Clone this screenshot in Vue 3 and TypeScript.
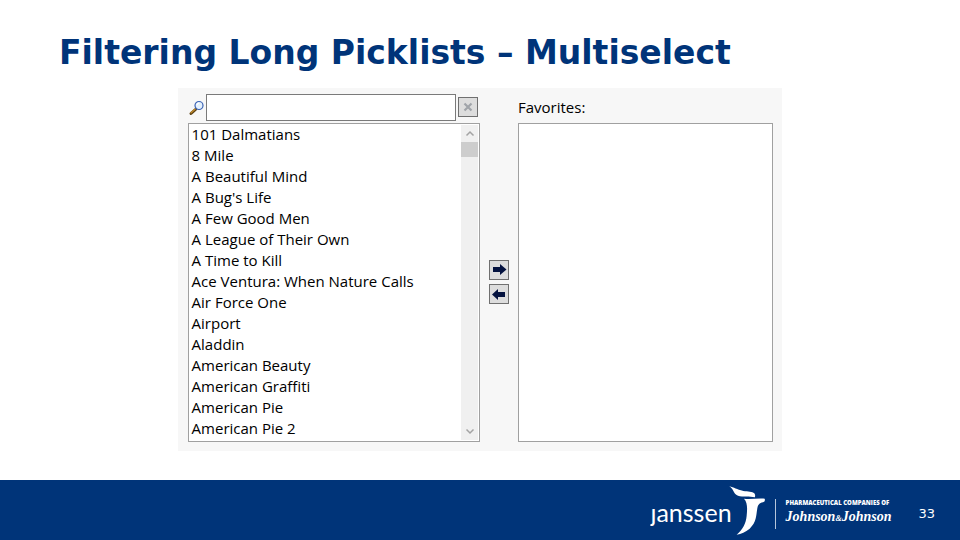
<script setup lang="ts">
import { computed, ref } from 'vue'

const movies: string[] = [
  '101 Dalmatians',
  '8 Mile',
  'A Beautiful Mind',
  "A Bug's Life",
  'A Few Good Men',
  'A League of Their Own',
  'A Time to Kill',
  'Ace Ventura: When Nature Calls',
  'Air Force One',
  'Airport',
  'Aladdin',
  'American Beauty',
  'American Graffiti',
  'American Pie',
  'American Pie 2',
]

const filter = ref('')
const favorites = ref<string[]>([])
const pickedLeft = ref<string[]>([])
const pickedRight = ref<string[]>([])

const available = computed(() =>
  movies.filter(
    (m) => !favorites.value.includes(m) && m.toLowerCase().includes(filter.value.toLowerCase()),
  ),
)

function add(): void {
  favorites.value = [...favorites.value, ...pickedLeft.value]
  pickedLeft.value = []
}

function remove(): void {
  favorites.value = favorites.value.filter((m) => !pickedRight.value.includes(m))
  pickedRight.value = []
}
</script>

<template>
  <div class="slide">
    <h1 class="title">Filtering Long Picklists – Multiselect</h1>

    <main class="panel">
      <div class="column">
        <div class="head">
          <label class="lens" for="filter" aria-label="Filter">
            <svg width="16" height="16" viewBox="0 0 16 16">
              <path d="M3 13.500 7.500 9.500" stroke="#5c4012" stroke-width="3" stroke-linecap="round" />
              <path d="M3 12.800 7 9.300" stroke="#c08a2c" stroke-width="1.400" stroke-linecap="round" />
              <circle cx="11" cy="5.500" r="4" fill="#e4f1fd" stroke="#3a62b4" stroke-width="1.200" />
              <path d="M8.900 5.200a2.200 2.200 0 0 1 2-2" fill="none" stroke="#fff" stroke-width="1.200" />
            </svg>
          </label>
          <input id="filter" v-model="filter" class="filter" type="text" />
          <button class="square" type="button" aria-label="Clear filter" @click="filter = ''">
            <svg width="18" height="18" viewBox="0 0 18 18">
              <path d="M5.500 5.500l7 7M12.500 5.500l-7 7" stroke="#a0a4a9" stroke-width="2.200" />
            </svg>
          </button>
        </div>
        <div class="box">
          <select v-model="pickedLeft" class="list" multiple size="15" aria-label="Available">
            <option v-for="m in available" :key="m" :value="m">{{ m }}</option>
          </select>
          <div class="scrollbar" aria-hidden="true">
            <svg width="17" height="17" viewBox="0 0 17 17">
              <path d="M5.500 10.500 9 7l3.500 3.500" fill="none" stroke="#a3a3a3" stroke-width="1.500" />
            </svg>
            <div class="thumb"></div>
            <svg class="down" width="17" height="17" viewBox="0 0 17 17">
              <path d="M5.500 6.500 9 10l3.500-3.500" fill="none" stroke="#a3a3a3" stroke-width="1.500" />
            </svg>
          </div>
        </div>
      </div>

      <div class="movers">
        <button class="square" type="button" aria-label="Add to favorites" @click="add">
          <svg width="18" height="18" viewBox="0 0 18 18">
            <path d="M3 6h7V3l6.500 5.500L10 14v-3H3z" fill="#04123f" />
          </svg>
        </button>
        <button class="square" type="button" aria-label="Remove from favorites" @click="remove">
          <svg width="18" height="18" viewBox="0 0 18 18">
            <path d="M15 7H8V4L2 9.500 8 15v-3h7z" fill="#04123f" />
          </svg>
        </button>
      </div>

      <div class="column">
        <div class="head">
          <label for="favorites">Favorites:</label>
        </div>
        <div class="box">
          <select id="favorites" v-model="pickedRight" class="list" multiple size="15">
            <option v-for="m in favorites" :key="m" :value="m">{{ m }}</option>
          </select>
        </div>
      </div>
    </main>

    <footer class="footer">
      <span class="brand">janssen</span>
      <svg class="emblem" width="40" height="52" viewBox="0 -2 120 156" aria-hidden="true">
        <path d="M4 5C18 8 26 15 46 19C60 21 73 20 79 26Q83 31 81 38C64 34 45 38 30 33C14 27 19 14 4 5Z" fill="#fff" />
        <path d="M48 42C66 45 88 40 110 42Q113 50 105 53C94 55 90 60 88 71C84 94 86 112 65 132C52 143 40 147 26 150C44 135 54 116 56 93C58 72 59 54 48 42Z" fill="#fff" />
      </svg>
      <div class="company">
        <span class="caption">PHARMACEUTICAL COMPANIES OF</span>
        <span class="script">Johnson<small>&amp;</small>Johnson</span>
      </div>
      <span class="page">33</span>
    </footer>
  </div>
</template>

<style>
body {
  margin: 0;
}
</style>

<style scoped>
.slide {
  display: flex;
  flex-direction: column;
  min-height: 100vh;
  background: #fff;
  color: #000;
  font: 15px/21px 'Open Sans', 'Noto Sans', sans-serif;
}

.title {
  margin: 0;
  padding: 33px 59px 15px;
  color: #003479;
  font: bold 33px/40px 'DejaVu Sans', sans-serif;
  white-space: nowrap;
}

.panel {
  box-sizing: border-box;
  display: grid;
  grid-template-columns: 292fr 38px 255fr;
  width: 63%;
  margin: 0 auto;
  padding: 6px 9px 9px 10px;
  background: #f7f7f7;
}

.column {
  display: flex;
  flex-direction: column;
  gap: 2px;
  min-width: 0;
}

.head {
  display: flex;
  align-items: center;
  height: 27px;
}

.lens {
  display: flex;
  width: 18px;
}

.filter {
  box-sizing: border-box;
  flex: 1;
  min-width: 0;
  height: 27px;
  margin: 0 2px 0 0;
  padding: 0 4px;
  border: 1px solid #7a7a7a;
  background: #fff;
  font: inherit;
}

.square {
  box-sizing: border-box;
  flex: none;
  display: grid;
  place-items: center;
  width: 20px;
  height: 20px;
  margin: 0 2px 0 0;
  padding: 0;
  border: 1px solid #707070;
  border-radius: 0;
  background: #dddddd;
}

.head .square {
  margin-bottom: 1px;
}

.box {
  display: flex;
  padding: 0 1px 1px;
  border: 1px solid #a0a0a0;
  background: #fff;
}

.list {
  flex: 1;
  min-width: 0;
  height: 315px;
  margin: 0 0 1px;
  padding: 0;
  border: 0;
  border-radius: 0;
  outline: 0;
  overflow: hidden;
  background: #fff;
  color: #000;
  font: inherit;
}

.list option {
  box-sizing: border-box;
  height: 21px;
  min-height: 21px;
  padding: 0 2px;
}

.scrollbar {
  display: flex;
  flex-direction: column;
  width: 17px;
  margin-top: 1px;
  background: #f0f0f0;
}

.thumb {
  height: 15px;
  background: #cdcdcd;
}

.down {
  margin-top: auto;
}

.movers {
  display: flex;
  flex-direction: column;
  align-items: center;
  justify-content: center;
  gap: 4px;
  padding-top: 28px;
}

.movers .square {
  margin: 0;
}

.footer {
  display: flex;
  align-items: center;
  justify-content: flex-end;
  height: 60px;
  margin-top: auto;
  padding-right: 25px;
  background: #003479;
  color: #fff;
}

/* The wordmark has a dotless j: everything above x-height is clipped. */
.brand {
  margin-right: -4px;
  padding-top: 4px;
  font: 25px/32px Lato, sans-serif;
  clip-path: inset(16px 0 0 0);
}

.emblem {
  margin-right: 7px;
}

.company {
  display: flex;
  flex-direction: column;
  align-items: flex-start;
  margin-top: 8px;
  padding-left: 10px;
  border-left: 1px solid #b5c5da;
  white-space: nowrap;
}

.caption {
  font: 800 6px/8px 'Open Sans', sans-serif;
}

.script {
  font: italic bold 14px/20px 'Liberation Serif', serif;
}

.script small {
  font-size: 8px;
}

.page {
  margin-left: 27px;
  padding-top: 8px;
  font: 13px/20px 'DejaVu Sans', sans-serif;
}
</style>
